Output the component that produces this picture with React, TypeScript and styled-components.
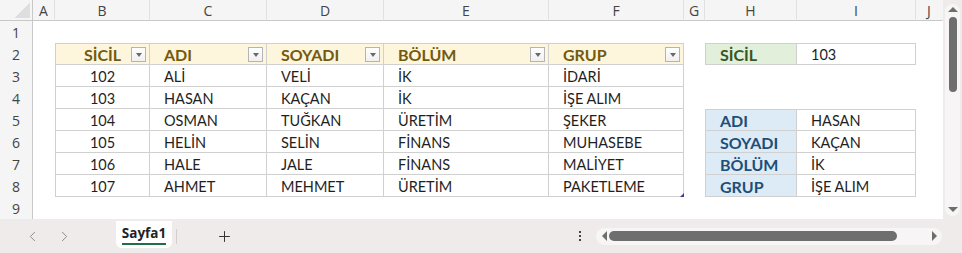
import React from 'react';
import styled, { createGlobalStyle, css } from 'styled-components';
import { ChevronLeft, ChevronRight, Plus } from 'lucide-react';

const GlobalStyle = createGlobalStyle`
  html, body {
    margin: 0;
    padding: 0;
    background: #efebeb;
  }
  body {
    font-family: Lato, "Liberation Sans", sans-serif;
  }
`;

const COLS = ['A', 'B', 'C', 'D', 'E', 'F', 'G', 'H', 'I', 'J'];
const WIDTHS = [22, 95, 117, 117, 165, 135, 21, 92, 119, 27];

type Kind = 'blank' | 'head' | 'data' | 'keyGreen' | 'keyBlue' | 'value';

interface CellData {
  text?: string;
  kind: Kind;
  center?: boolean;
  filter?: boolean;
  left?: boolean;
  top?: boolean;
  handle?: boolean;
}

const people = [
  ['102', 'ALİ', 'VELİ', 'İK', 'İDARİ'],
  ['103', 'HASAN', 'KAÇAN', 'İK', 'İŞE ALIM'],
  ['104', 'OSMAN', 'TUĞKAN', 'ÜRETİM', 'ŞEKER'],
  ['105', 'HELİN', 'SELİN', 'FİNANS', 'MUHASEBE'],
  ['106', 'HALE', 'JALE', 'FİNANS', 'MALİYET'],
  ['107', 'AHMET', 'MEHMET', 'ÜRETİM', 'PAKETLEME'],
];

const lookup = [
  ['ADI', 'HASAN'],
  ['SOYADI', 'KAÇAN'],
  ['BÖLÜM', 'İK'],
  ['GRUP', 'İŞE ALIM'],
];

const blank = (): CellData => ({ kind: 'blank' });

const buildRows = (): CellData[][] => {
  const rows: CellData[][] = [];
  rows.push(COLS.map(blank));

  const headers = ['SİCİL', 'ADI', 'SOYADI', 'BÖLÜM', 'GRUP'];
  rows.push([
    blank(),
    ...headers.map((h, i) => ({ kind: 'head' as Kind, text: h, filter: true, top: true, left: i === 0, center: i === 0 })),
    blank(),
    { kind: 'keyGreen', text: 'SİCİL', top: true, left: true },
    { kind: 'value', text: '103', top: true },
    blank(),
  ]);

  people.forEach((p, r) => {
    const side: CellData[] =
      r >= 2
        ? [
            { kind: 'keyBlue', text: lookup[r - 2][0], left: true, top: r === 2 },
            { kind: 'value', text: lookup[r - 2][1], top: r === 2 },
          ]
        : [blank(), blank()];
    rows.push([
      blank(),
      ...p.map((t, i) => ({
        kind: 'data' as Kind,
        text: t,
        left: i === 0,
        center: i === 0,
        handle: i === 4 && r === people.length - 1,
      })),
      blank(),
      ...side,
      blank(),
    ]);
  });

  rows.push(COLS.map(blank));
  return rows;
};

const Page = styled.div`
  width: 962px;
  height: 253px;
  display: flex;
  flex-direction: column;
  overflow: hidden;
`;

const Workspace = styled.div`
  display: flex;
  height: 219px;
`;

const Sheet = styled.div`
  display: grid;
  grid-template-columns: 33px ${WIDTHS.map((w) => `${w}px`).join(' ')};
  grid-template-rows: 21px repeat(9, 22px);
  width: 943px;
  background: #fff;
`;

const Corner = styled.div`
  background: #f5f5f5;
  border-right: 1px solid #c8c8c8;
  border-bottom: 1px solid #c8c8c8;
  box-sizing: border-box;
  display: flex;
  align-items: flex-end;
  justify-content: flex-end;
  padding: 0 2px 2px 0;

  &::after {
    content: '';
    width: 15px;
    height: 15px;
    background: linear-gradient(to bottom right, transparent 50%, #dedede 50%);
  }
`;

const ColHead = styled.div<{ $last?: boolean }>`
  background: #f5f5f5;
  border-bottom: 1px solid #c8c8c8;
  border-right: 1px solid ${({ $last }) => ($last ? 'transparent' : '#e1e1e1')};
  box-sizing: border-box;
  display: flex;
  align-items: center;
  justify-content: center;
  font-family: 'Open Sans', 'Noto Sans', sans-serif;
  font-size: 14px;
  color: #444;
`;

const RowHead = styled.div`
  background: #f5f5f5;
  border-right: 1px solid #c8c8c8;
  box-sizing: border-box;
  display: flex;
  align-items: center;
  justify-content: center;
  font-family: 'Open Sans', 'Noto Sans', sans-serif;
  font-size: 14px;
  color: #444;
`;

const kindStyles: Record<Kind, ReturnType<typeof css>> = {
  blank: css``,
  head: css`
    background: #fdf5dc;
    color: #735a0f;
    font-weight: 700;
    font-size: 16px;
  `,
  data: css`
    color: #1f1f1f;
  `,
  keyGreen: css`
    background: #e2efda;
    color: #375623;
    font-weight: 700;
    font-size: 16px;
  `,
  keyBlue: css`
    background: #ddebf7;
    color: #1f4e78;
    font-weight: 700;
    font-size: 16px;
  `,
  value: css`
    color: #1f1f1f;
  `,
};

const Cell = styled.div<{ $kind: Kind; $center?: boolean; $left?: boolean; $top?: boolean }>`
  position: relative;
  box-sizing: border-box;
  display: flex;
  align-items: center;
  justify-content: ${({ $center }) => ($center ? 'center' : 'flex-start')};
  padding: 1px 0 0 ${({ $center }) => ($center ? 0 : 14)}px;
  font-size: 14.5px;
  white-space: nowrap;
  ${({ $kind }) => kindStyles[$kind]}
  ${({ $kind }) =>
    $kind !== 'blank' &&
    css`
      border-right: 1px solid #d0d0d0;
      border-bottom: 1px solid #d0d0d0;
    `}
  ${({ $left }) => $left && 'border-left: 1px solid #d0d0d0;'}
  ${({ $top }) => $top && 'border-top: 1px solid #d0d0d0;'}
`;

const FilterButton = styled.span`
  position: absolute;
  right: 3px;
  top: 3px;
  width: 15px;
  height: 15px;
  box-sizing: border-box;
  border: 1px solid #b4b4b4;
  background: linear-gradient(#ffffff, #f0f0f0);
  display: flex;
  align-items: center;
  justify-content: center;

  &::after {
    content: '';
    border-top: 4px solid #6a6a6a;
    border-left: 3.5px solid transparent;
    border-right: 3.5px solid transparent;
  }
`;

const ResizeHandle = styled.span`
  position: absolute;
  right: -1px;
  bottom: -1px;
  width: 0;
  height: 0;
  border-bottom: 4px solid #3b3f8f;
  border-left: 4px solid transparent;
`;

const VScroll = styled.div`
  width: 19px;
  background: #efebeb;
  display: flex;
  flex-direction: column;
  align-items: center;
  padding: 4px 0 3px;
  box-sizing: border-box;
`;

const Track = styled.div`
  flex: 1;
  width: 15px;
  border-radius: 8px;
  background: #f7f5f5;
  display: flex;
  flex-direction: column;
  align-items: center;
  padding: 3px 0 4px;
  box-sizing: border-box;
`;

const ArrowUp = styled.span`
  border-bottom: 5px solid #6e6e6e;
  border-left: 5px solid transparent;
  border-right: 5px solid transparent;
`;

const ArrowDown = styled.span`
  margin-top: auto;
  border-top: 5px solid #6e6e6e;
  border-left: 5px solid transparent;
  border-right: 5px solid transparent;
`;

const VThumb = styled.span`
  margin-top: 5px;
  width: 8px;
  height: 75px;
  border-radius: 4px;
  background: #6e6e6e;
`;

const BottomBar = styled.div`
  height: 34px;
  display: flex;
  align-items: center;
  background: #efebeb;
  padding-left: 22px;
  font-family: 'Open Sans', 'Noto Sans', sans-serif;
`;

const NavButton = styled.span`
  width: 20px;
  display: flex;
  justify-content: center;
  color: #8c8c8c;
  & + & {
    margin-left: 12px;
  }
`;

const Tab = styled.div`
  margin-left: 42px;
  align-self: stretch;
  margin-top: 2px;
  margin-bottom: 5px;
  width: 56px;
  background: #fff;
  border-radius: 0 0 6px 6px;
  display: flex;
  flex-direction: column;
  align-items: center;
  justify-content: center;
  font-weight: 700;
  font-size: 13.5px;
  color: #222;
`;

const TabLabel = styled.span`
  padding-bottom: 2px;
  border-bottom: 2px solid #1e7145;
  line-height: 16px;
`;

const Divider = styled.span`
  margin-left: 4px;
  width: 1px;
  height: 15px;
  background: #d2cfcf;
`;

const AddButton = styled.span`
  margin-left: 37px;
  width: 20px;
  display: flex;
  justify-content: center;
  color: #333;
`;

const Spacer = styled.span`
  flex: 1;
`;

const Dots = styled.span`
  width: 10px;
  display: flex;
  flex-direction: column;
  align-items: center;
  gap: 2px;

  & > i {
    width: 2px;
    height: 2px;
    background: #444;
  }
`;

const HScroll = styled.div`
  margin-left: 11px;
  margin-right: 20px;
  width: 346px;
  height: 17px;
  border-radius: 9px;
  background: #f7f5f5;
  display: flex;
  align-items: center;
  padding: 0 5px 0 6px;
  box-sizing: border-box;
`;

const ArrowLeft = styled.span`
  border-right: 5px solid #6e6e6e;
  border-top: 5px solid transparent;
  border-bottom: 5px solid transparent;
`;

const ArrowRight = styled.span`
  margin-left: auto;
  border-left: 5px solid #6e6e6e;
  border-top: 5px solid transparent;
  border-bottom: 5px solid transparent;
`;

const HThumb = styled.span`
  margin-left: 2px;
  width: 288px;
  height: 10px;
  border-radius: 5px;
  background: #6e6e6e;
`;

const App: React.FC = () => {
  const rows = buildRows();

  return (
    <Page>
      <GlobalStyle />
      <Workspace>
        <Sheet>
          <Corner />
          {COLS.map((c, i) => (
            <ColHead key={c} $last={i === COLS.length - 1}>
              {c}
            </ColHead>
          ))}
          {rows.map((row, r) => (
            <React.Fragment key={r}>
              <RowHead>{r + 1}</RowHead>
              {row.map((cell, c) => (
                <Cell key={c} $kind={cell.kind} $center={cell.center} $left={cell.left} $top={cell.top}>
                  {cell.text}
                  {cell.filter && <FilterButton />}
                  {cell.handle && <ResizeHandle />}
                </Cell>
              ))}
            </React.Fragment>
          ))}
        </Sheet>
        <VScroll>
          <Track>
            <ArrowUp />
            <VThumb />
            <ArrowDown />
          </Track>
        </VScroll>
      </Workspace>
      <BottomBar>
        <NavButton>
          <ChevronLeft size={17} strokeWidth={1.4} />
        </NavButton>
        <NavButton>
          <ChevronRight size={17} strokeWidth={1.4} />
        </NavButton>
        <Tab>
          <TabLabel>Sayfa1</TabLabel>
        </Tab>
        <Divider />
        <AddButton>
          <Plus size={17} strokeWidth={1.4} />
        </AddButton>
        <Spacer />
        <Dots>
          <i />
          <i />
          <i />
        </Dots>
        <HScroll>
          <ArrowLeft />
          <HThumb />
          <ArrowRight />
        </HScroll>
      </BottomBar>
    </Page>
  );
};

export default App;
